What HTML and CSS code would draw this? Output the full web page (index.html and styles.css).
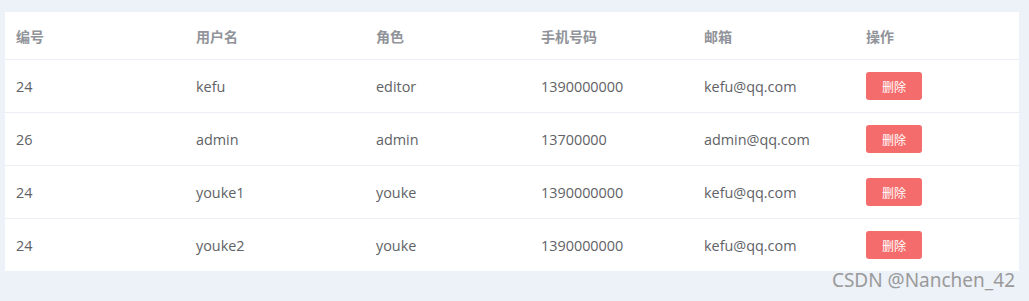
FILE: index.html
```html
<!DOCTYPE html>
<html lang="zh">
<head>
<meta charset="utf-8">
<link rel="stylesheet" href="styles.css">
</head>
<body>
<div class="page">
  <table class="table">
    <colgroup>
      <col class="c1"><col class="c2"><col class="c3"><col class="c4"><col class="c5"><col class="c6">
    </colgroup>
    <thead>
      <tr><th>编号</th><th>用户名</th><th>角色</th><th>手机号码</th><th>邮箱</th><th>操作</th></tr>
    </thead>
    <tbody>
      <tr><td>24</td><td>kefu</td><td>editor</td><td>1390000000</td><td>kefu@qq.com</td><td><button class="btn">删除</button></td></tr>
      <tr><td>26</td><td>admin</td><td>admin</td><td>13700000</td><td>admin@qq.com</td><td><button class="btn">删除</button></td></tr>
      <tr><td>24</td><td>youke1</td><td>youke</td><td>1390000000</td><td>kefu@qq.com</td><td><button class="btn">删除</button></td></tr>
      <tr><td>24</td><td>youke2</td><td>youke</td><td>1390000000</td><td>kefu@qq.com</td><td><button class="btn">删除</button></td></tr>
    </tbody>
  </table>
  <div class="watermark">CSDN @Nanchen_42</div>
</div>
</body>
</html>
```
FILE: styles.css
```css
html, body {
  margin: 0;
  padding: 0;
  background: #edf1f8;
  font-family: "Open Sans", "Noto Sans CJK SC", sans-serif;
}
.page {
  position: relative;
  width: 1029px;
  height: 301px;
  padding: 12px 10px 0 5px;
  box-sizing: border-box;
}
.table {
  width: 1014px;
  border-collapse: collapse;
  background: #fff;
  table-layout: fixed;
}
.c1 { width: 180px; }
.c2 { width: 180px; }
.c3 { width: 165px; }
.c4 { width: 163px; }
.c5 { width: 162px; }
.c6 { width: 164px; }
th, td {
  text-align: left;
  padding: 0 0 0 11px;
  font-size: 14.4px;
  border-bottom: 1px solid #ebeef5;
}
th {
  height: 47px;
  color: #909399;
  font-weight: bold;
  font-size: 14px;
  font-family: "Noto Sans CJK SC", sans-serif;
}
td {
  height: 52px;
  color: #606266;
}
tbody tr:last-child td {
  border-bottom: none;
  height: 52px;
}
.btn {
  width: 56px;
  height: 28px;
  border: none;
  border-radius: 3px;
  background: #f56c6c;
  color: #fff;
  font-size: 12px;
  font-family: "Noto Sans CJK SC", sans-serif;
  padding: 0;
  display: block;
}
.watermark {
  position: absolute;
  right: 14px;
  top: 267px;
  font-size: 19px;
  color: #9a9a9a;
  font-family: "Noto Sans", sans-serif;
}
```
